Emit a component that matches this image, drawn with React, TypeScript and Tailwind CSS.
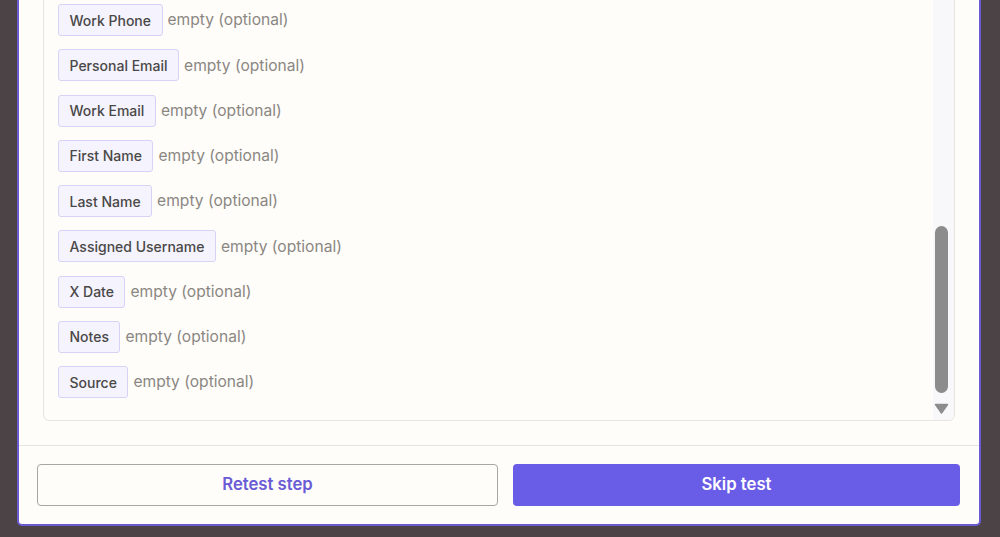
import React from "react";

const rows = [
  "Work Phone",
  "Personal Email",
  "Work Email",
  "First Name",
  "Last Name",
  "Assigned Username",
  "X Date",
  "Notes",
  "Source",
];

export default function App() {
  return (
    <div
      className="w-[1000px] h-[537px] overflow-hidden bg-[#4b4345] flex flex-col justify-end pb-[11px]"
      style={{ fontFamily: "Inter, 'Noto Sans', sans-serif" }}
    >
      <div className="ml-[17px] w-[964px] shrink-0 bg-[#fffdf9] border-2 border-[#6a5bd2] rounded-[5px] flex flex-col">
        <div className="px-6 pt-4">
          <div className="relative border border-[#e8e6e2] rounded-md pl-[14px] pr-6 pt-[14px] pb-[22px]">
            <div className="flex flex-col gap-[13.25px]">
              {rows.map((r) => (
                <div key={r} className="flex items-center gap-[5px] h-[32px]">
                  <span className="h-[32px] flex items-center px-[10.5px] bg-[#f4f3fe] border border-[#d6d3f6] rounded-[3px] text-[14px] font-medium text-[#4a4846]">
                    {r}
                  </span>
                  <span className="text-[15.6px] text-[#8a8783]">empty (optional)</span>
                </div>
              ))}
            </div>
            <div className="absolute right-0 top-0 bottom-0 w-[21px] bg-[#f8f8fb] rounded-r-md">
              <div className="absolute left-[2px] bottom-[27px] w-[13px] h-[167px] rounded-full bg-[#8c8c8c]" />
              <svg
                className="absolute left-[1px] bottom-[6px]"
                width="15"
                height="11"
                viewBox="0 0 15 11"
              >
                <path d="M1.5 1.5 L13.5 1.5 L7.5 10 Z" fill="#8c8c8c" stroke="#8c8c8c" strokeWidth="1.5" strokeLinejoin="round" />
              </svg>
            </div>
          </div>
        </div>
        <div className="mt-[24px] border-t border-[#e7e5e2] flex gap-[15px] pl-[18px] pr-[19px] pt-[18px] pb-[18px]">
          <button className="w-[461px] h-[42px] border border-[#a9a7a4] rounded-[4px] text-[#6a5bd6] text-[16.7px] font-semibold bg-[#fffdf9]">
            Retest step
          </button>
          <button className="flex-1 h-[42px] rounded-[4px] bg-[#695ce6] text-white text-[16.7px] font-semibold">
            Skip test
          </button>
        </div>
      </div>
    </div>
  );
}
